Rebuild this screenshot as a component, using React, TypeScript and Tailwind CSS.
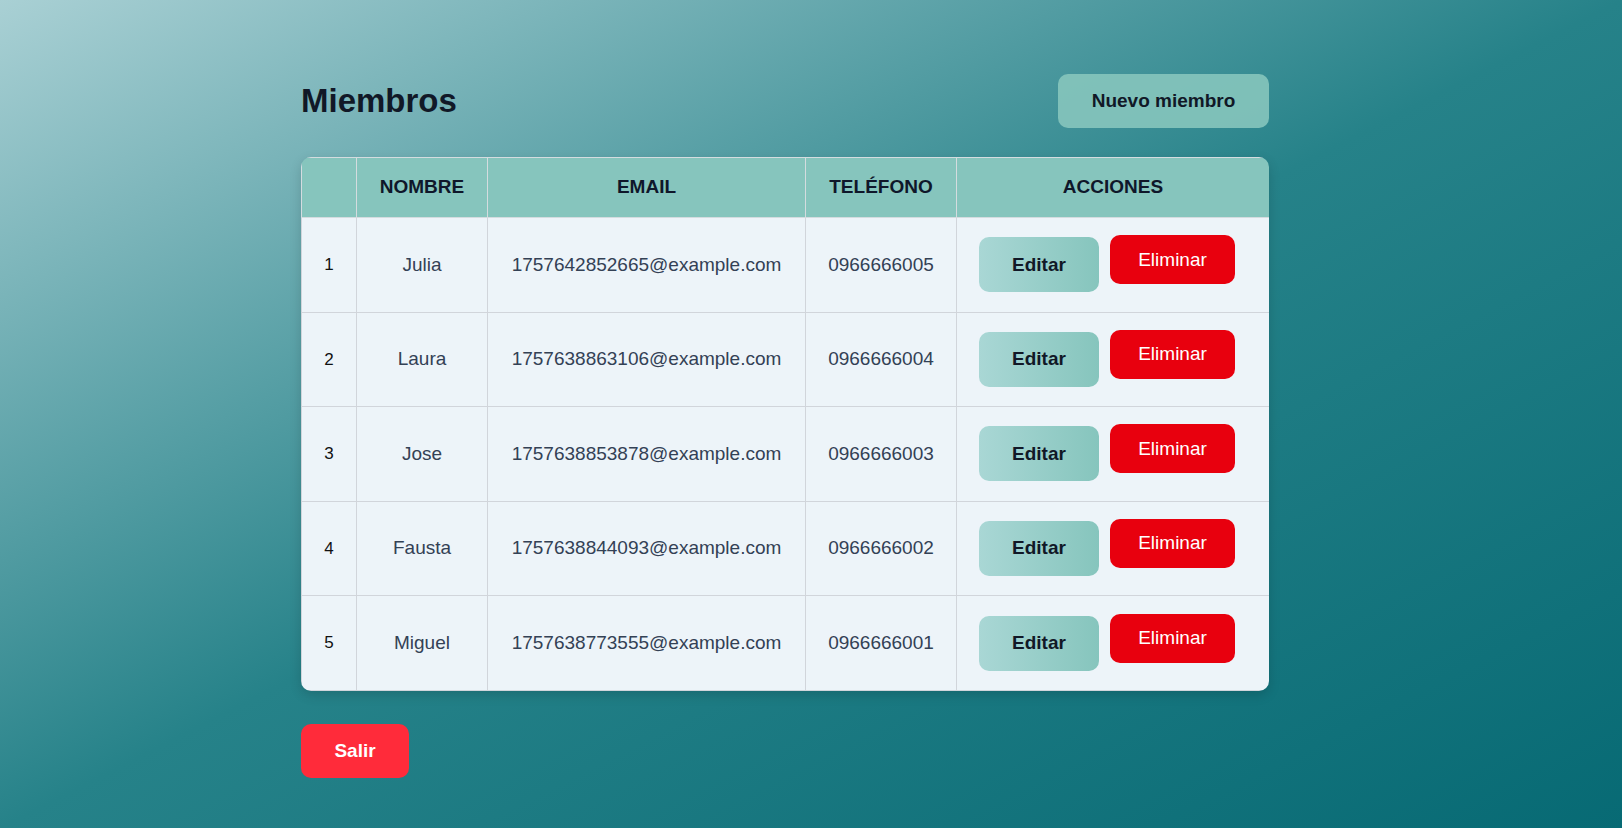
const miembros = [
  { id: 1, nombre: "Julia", email: "1757642852665@example.com", telefono: "0966666005" },
  { id: 2, nombre: "Laura", email: "1757638863106@example.com", telefono: "0966666004" },
  { id: 3, nombre: "Jose", email: "1757638853878@example.com", telefono: "0966666003" },
  { id: 4, nombre: "Fausta", email: "1757638844093@example.com", telefono: "0966666002" },
  { id: 5, nombre: "Miguel", email: "1757638773555@example.com", telefono: "0966666001" },
];

export default function App() {
  return (
    <div className="min-h-screen w-full bg-[linear-gradient(to_bottom_right,#a9d0d4,#268289_50%,#076a74)] font-['Liberation_Sans',Arial,sans-serif] text-[19px]">
      <div className="ml-[301px] w-[968px] pt-[74px] pb-[48px]">
        <div className="flex items-center justify-between">
          <h1 className="text-[33px] font-bold text-[#111827]">Miembros</h1>
          <button className="h-[54px] w-[211px] rounded-[10px] bg-[#86c5bd]/90 font-bold text-[#111827]">
            Nuevo miembro
          </button>
        </div>

        <div className="mt-[29px] overflow-hidden rounded-[10px] shadow-[0_4px_12px_rgba(0,0,0,0.15)]">
          <table className="w-full table-fixed border-collapse">
            <colgroup>
              <col className="w-[55px]" />
              <col className="w-[131px]" />
              <col className="w-[318px]" />
              <col className="w-[151px]" />
              <col className="w-[313px]" />
            </colgroup>
            <thead>
              <tr className="h-[60px] bg-[#86c5bd] text-[#0f172a]">
                <th className="border border-[#d4dcdf]"></th>
                <th className="border border-[#d4dcdf] font-bold">NOMBRE</th>
                <th className="border border-[#d4dcdf] font-bold">EMAIL</th>
                <th className="border border-[#d4dcdf] font-bold">TELÉFONO</th>
                <th className="border border-[#d4dcdf] font-bold">ACCIONES</th>
              </tr>
            </thead>
            <tbody>
              {miembros.map((m) => (
                <tr key={m.id} className="h-[94.6px] bg-[#edf4f9]">
                  <td className="border border-[#d1d5db] text-center text-[17px] text-[#111111]">{m.id}</td>
                  <td className="border border-[#d1d5db] text-center text-[#334155]">{m.nombre}</td>
                  <td className="border border-[#d1d5db] text-center text-[#334155]">{m.email}</td>
                  <td className="border border-[#d1d5db] text-center text-[#334155]">{m.telefono}</td>
                  <td className="border border-[#d1d5db] pl-[22px]">
                    <div className="flex items-center gap-[11px]">
                      <button className="h-[55px] w-[120px] rounded-[10px] bg-linear-to-r from-[#a9d7d5] to-[#86c5bd] font-bold text-[#111827]">
                        Editar
                      </button>
                      <button className="mb-[10px] h-[49px] w-[125px] rounded-[10px] bg-[#e8000e] text-white">
                        Eliminar
                      </button>
                    </div>
                  </td>
                </tr>
              ))}
            </tbody>
          </table>
        </div>

        <button className="mt-[33px] h-[54px] w-[108px] rounded-[10px] bg-[#ff2b3a] font-bold text-white">
          Salir
        </button>
      </div>
    </div>
  );
}
